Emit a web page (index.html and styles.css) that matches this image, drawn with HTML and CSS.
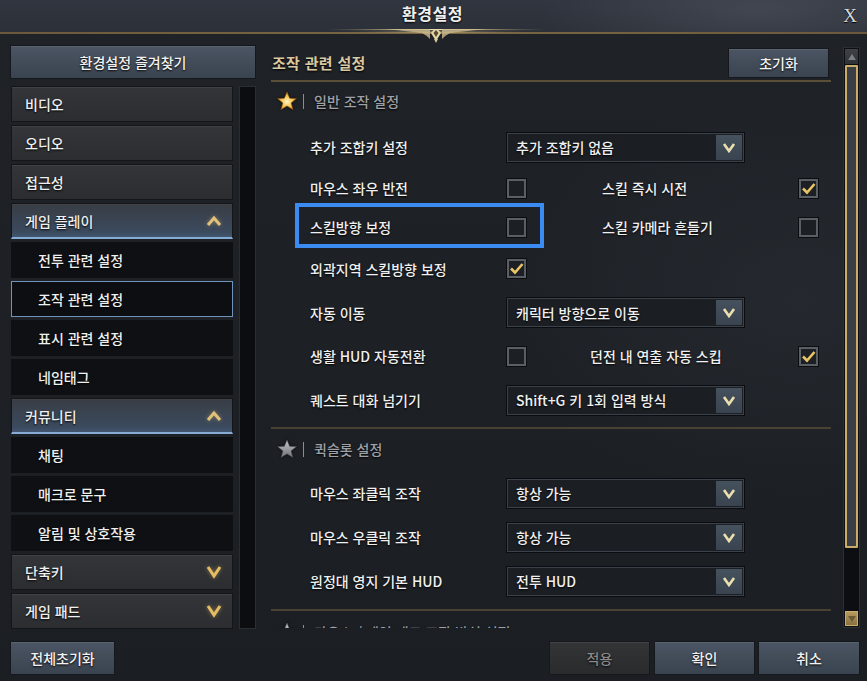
FILE: index.html
```html
<!DOCTYPE html>
<html lang="ko">
<head>
<meta charset="utf-8">
<title>환경설정</title>
<link rel="stylesheet" href="styles.css">
</head>
<body>
<div class="window">
  <header class="titlebar">
    <div class="title">환경설정</div>
    <div class="close">X</div>
  </header>
  <div class="title-line">
    <svg class="ornament" width="220" height="14" viewBox="0 0 220 14">
      <defs>
        <linearGradient id="og" x1="0" x2="1" y1="0" y2="0">
          <stop offset="0" stop-color="#8a7a55" stop-opacity="0"/>
          <stop offset="0.35" stop-color="#cbb98a"/>
          <stop offset="0.5" stop-color="#efe2b8"/>
          <stop offset="0.65" stop-color="#cbb98a"/>
          <stop offset="1" stop-color="#8a7a55" stop-opacity="0"/>
        </linearGradient>
      </defs>
      <rect x="0" y="0" width="220" height="1.2" fill="url(#og)"/>
      <rect x="20" y="2.5" width="180" height="1" fill="url(#og)" opacity="0.7"/>
      <path d="M104 0 L60 0 Q80 2 96 4 Q100 6 104 10 Z" fill="#cdbb8c" opacity="0.8"/>
      <path d="M116 0 L160 0 Q140 2 124 4 Q120 6 116 10 Z" fill="#cdbb8c" opacity="0.8"/>
      <path d="M110 -2 L115 4 L110 12 L105 4 Z" fill="#e6d6a6"/>
      <path d="M110 1 L112.5 4 L110 8 L107.5 4 Z" fill="#5a4c30"/>
      <path d="M108 10 L110 14 L112 10 Z" fill="#d8c89a"/>
    </svg>
  </div>

  <div class="main">
    <aside class="side">
      <button class="btn fav">환경설정 즐겨찾기</button>
      <div class="side-body">
        <ul class="menu">
          <li class="cat">비디오</li>
          <li class="cat">오디오</li>
          <li class="cat">접근성</li>
          <li class="cat open">게임 플레이
            <svg class="chev" width="16" height="12" viewBox="0 0 16 12"><path d="M2 10 L8 3 L14 10" fill="none" stroke="#e2c27a" stroke-width="3" stroke-linejoin="miter"/></svg>
          </li>
          <li class="sub">전투 관련 설정</li>
          <li class="sub active">조작 관련 설정</li>
          <li class="sub">표시 관련 설정</li>
          <li class="sub">네임태그</li>
          <li class="cat open">커뮤니티
            <svg class="chev" width="16" height="12" viewBox="0 0 16 12"><path d="M2 10 L8 3 L14 10" fill="none" stroke="#e2c27a" stroke-width="3"/></svg>
          </li>
          <li class="sub">채팅</li>
          <li class="sub">매크로 문구</li>
          <li class="sub">알림 및 상호작용</li>
          <li class="cat">단축키
            <svg class="chev" width="16" height="14" viewBox="0 0 16 14"><path d="M2 2 L8 11 L14 2" fill="none" stroke="#e6bd62" stroke-width="3"/></svg>
          </li>
          <li class="cat">게임 패드
            <svg class="chev" width="16" height="14" viewBox="0 0 16 14"><path d="M2 2 L8 11 L14 2" fill="none" stroke="#e6bd62" stroke-width="3"/></svg>
          </li>
        </ul>
        <div class="side-scroll"></div>
      </div>
    </aside>

    <section class="panel">
      <div class="panel-main">
        <div class="panel-head">
          <h2 class="panel-title">조작 관련 설정</h2>
          <button class="btn reset">초기화</button>
        </div>
        <div class="head-line"></div>
        <div class="scroll-area">
          <div class="group">
            <div class="group-title">
              <svg class="star" width="20" height="20" viewBox="0 0 20 20">
                <defs>
                  <radialGradient id="sg" cx="0.5" cy="0.55" r="0.6">
                    <stop offset="0" stop-color="#fff6c8"/>
                    <stop offset="0.5" stop-color="#f5c24e"/>
                    <stop offset="1" stop-color="#c9791c"/>
                  </radialGradient>
                </defs>
                <polygon points="10,0.8 12.7,7.2 19.6,7.5 14.2,11.9 16.1,18.8 10,14.9 3.9,18.8 5.8,11.9 0.4,7.5 7.3,7.2" fill="url(#sg)" stroke="#7a4a10" stroke-width="0.6"/>
              </svg>
              <span class="vbar"></span>
              <span>일반 조작 설정</span>
            </div>
            <div class="rows">
              <div class="row dd r46">
                <span class="label">추가 조합키 설정</span>
                <div class="select"><span>추가 조합키 없음</span><span class="arrow"><svg width="14" height="11" viewBox="0 0 14 11"><path d="M2 2 L7 9 L12 2" fill="none" stroke="#ecdfae" stroke-width="2.6"/></svg></span></div>
              </div>
              <div class="row r36">
                <span class="label">마우스 좌우 반전</span>
                <span class="check"></span>
                <span class="label">스킬 즉시 시전</span>
                <span class="check on"><svg width="15" height="15" viewBox="0 0 15 15"><path d="M2 7.5 L6 11.5 L13.5 3" fill="none" stroke="#e8c466" stroke-width="2.6"/></svg></span>
              </div>
              <div class="row r42 hl-row">
                <span class="label">스킬방향 보정</span>
                <span class="check"></span>
                <span class="label">스킬 카메라 흔들기</span>
                <span class="check"></span>
                <span class="highlight"></span>
              </div>
              <div class="row r41">
                <span class="label">외곽지역 스킬방향 보정</span>
                <span class="check on"><svg width="15" height="15" viewBox="0 0 15 15"><path d="M2 7.5 L6 11.5 L13.5 3" fill="none" stroke="#e8c466" stroke-width="2.6"/></svg></span>
              </div>
              <div class="row dd r47">
                <span class="label">자동 이동</span>
                <div class="select"><span>캐릭터 방향으로 이동</span><span class="arrow"><svg width="14" height="11" viewBox="0 0 14 11"><path d="M2 2 L7 9 L12 2" fill="none" stroke="#ecdfae" stroke-width="2.6"/></svg></span></div>
              </div>
              <div class="row r40">
                <span class="label">생활 HUD 자동전환</span>
                <span class="check"></span>
                <span class="label shift">던전 내 연출 자동 스킵</span>
                <span class="check on"><svg width="15" height="15" viewBox="0 0 15 15"><path d="M2 7.5 L6 11.5 L13.5 3" fill="none" stroke="#e8c466" stroke-width="2.6"/></svg></span>
              </div>
              <div class="row dd r48">
                <span class="label">퀘스트 대화 넘기기</span>
                <div class="select"><span>Shift+G 키 1회 입력 방식</span><span class="arrow"><svg width="14" height="11" viewBox="0 0 14 11"><path d="M2 2 L7 9 L12 2" fill="none" stroke="#ecdfae" stroke-width="2.6"/></svg></span></div>
              </div>
            </div>
          </div>
          <div class="sep"></div>

          <div class="group g2">
            <div class="group-title">
              <svg class="star" width="20" height="20" viewBox="0 0 20 20">
                <defs>
                  <linearGradient id="gg" x1="0" x2="0" y1="0" y2="1">
                    <stop offset="0" stop-color="#c4c8cc"/>
                    <stop offset="1" stop-color="#6c7076"/>
                  </linearGradient>
                </defs>
                <polygon points="10,0.8 12.7,7.2 19.6,7.5 14.2,11.9 16.1,18.8 10,14.9 3.9,18.8 5.8,11.9 0.4,7.5 7.3,7.2" fill="url(#gg)" stroke="#3a3d42" stroke-width="0.6"/>
              </svg>
              <span class="vbar"></span>
              <span>퀵슬롯 설정</span>
            </div>
            <div class="rows">
              <div class="row dd r44">
                <span class="label">마우스 좌클릭 조작</span>
                <div class="select"><span>항상 가능</span><span class="arrow"><svg width="14" height="11" viewBox="0 0 14 11"><path d="M2 2 L7 9 L12 2" fill="none" stroke="#ecdfae" stroke-width="2.6"/></svg></span></div>
              </div>
              <div class="row dd r44">
                <span class="label">마우스 우클릭 조작</span>
                <div class="select"><span>항상 가능</span><span class="arrow"><svg width="14" height="11" viewBox="0 0 14 11"><path d="M2 2 L7 9 L12 2" fill="none" stroke="#ecdfae" stroke-width="2.6"/></svg></span></div>
              </div>
              <div class="row dd r44">
                <span class="label">원정대 영지 기본 HUD</span>
                <div class="select"><span>전투 HUD</span><span class="arrow"><svg width="14" height="11" viewBox="0 0 14 11"><path d="M2 2 L7 9 L12 2" fill="none" stroke="#ecdfae" stroke-width="2.6"/></svg></span></div>
              </div>
            </div>
          </div>
          <div class="sep"></div>

          <div class="group g3">
            <div class="group-title">
              <svg class="star" width="20" height="20" viewBox="0 0 20 20">
                <polygon points="10,0.8 12.7,7.2 19.6,7.5 14.2,11.9 16.1,18.8 10,14.9 3.9,18.8 5.8,11.9 0.4,7.5 7.3,7.2" fill="url(#gg)" stroke="#3a3d42" stroke-width="0.6"/>
              </svg>
              <span class="vbar"></span>
              <span>마우스 / 게임 패드 조작 방식 설정</span>
            </div>
          </div>
        </div>
      </div>
      <div class="vscroll">
        <div class="vs-btn up"><svg width="10" height="8" viewBox="0 0 10 8"><path d="M1 7 L5 1 L9 7 Z" fill="#7c7f84"/></svg></div>
        <div class="vs-thumb"></div>
        <div class="vs-track"></div>
        <div class="vs-btn down"><svg width="10" height="8" viewBox="0 0 10 8"><path d="M1 1 L5 7 L9 1 Z" fill="#6b5a38"/></svg></div>
      </div>
    </section>
  </div>

  <footer class="footer">
    <button class="btn footbtn wide">전체초기화</button>
    <div class="foot-right">
      <button class="btn footbtn disabled">적용</button>
      <button class="btn footbtn">확인</button>
      <button class="btn footbtn last">취소</button>
    </div>
  </footer>
</div>
</body>
</html>
```

FILE: styles.css
```css
* { box-sizing: border-box; }

html, body {
  margin: 0;
  padding: 0;
  width: 867px;
  height: 681px;
  overflow: hidden;
  background: #1c1f24;
}

body {
  font-family: "Noto Sans CJK KR", "Noto Sans", sans-serif;
  font-size: 14px;
  font-weight: 500;
  color: #ececec;
}

.window {
  width: 867px;
  height: 681px;
  display: flex;
  flex-direction: column;
  background:
    radial-gradient(ellipse 300px 200px at 800px 300px, rgba(60,66,76,0.25), transparent),
    linear-gradient(#1f2227, #1b1e22);
}

/* title */
.titlebar {
  height: 32px;
  position: relative;
  display: flex;
  align-items: center;
  justify-content: center;
  background:
    radial-gradient(ellipse 220px 60px at 760px 10px, rgba(120,126,138,0.25), transparent),
    linear-gradient(#30353f, #2b3039);
}

.title {
  font-size: 16px;
  font-weight: 700;
  color: #f0f0f0;
  letter-spacing: 0.5px;
  text-shadow: 0 1px 2px #000;
  margin-left: -2px;
  margin-top: -6px;
}

.close {
  position: absolute;
  right: 10px;
  top: 5px;
  font-family: "Liberation Serif", serif;
  font-size: 19px;
  color: #d8d8d8;
  text-shadow: 0 1px 1px #000;
}

.title-line {
  height: 2px;
  background: linear-gradient(90deg, #6b5a3a, #7a6744 50%, #6b5a3a);
  position: relative;
}

.ornament {
  position: absolute;
  left: 326px;
  top: -3px;
}

/* main */
.main {
  display: grid;
  grid-template-columns: 246px 589px;
  column-gap: 15px;
  padding: 11px 7px 0 10px;
  height: 595px;
}

.btn {
  font-family: inherit;
  font-size: 14px;
  font-weight: 500;
  color: #f2f2f2;
  text-shadow: 0 1px 2px #000;
  border: 1px solid #15181c;
  background: linear-gradient(#4b5563, #3a4450);
  box-shadow: inset 0 1px 0 rgba(255,255,255,0.08);
  padding: 0;
  cursor: default;
}

.fav {
  width: 246px;
  height: 34px;
  display: block;
}

.side-body {
  display: flex;
  margin-top: 7px;
  gap: 6px;
  padding-left: 1px;
}

.menu {
  list-style: none;
  margin: 0;
  padding: 0;
  width: 223px;
  display: flex;
  flex-direction: column;
  gap: 3px;
}

.menu li {
  height: 36px;
  display: flex;
  align-items: center;
  justify-content: space-between;
  text-shadow: 0 1px 2px #000;
  color: #f0f0f0;
}

.cat {
  padding: 0 10px 0 13px;
  background: linear-gradient(#333539, #2b2d30);
  border: 1px solid #141518;
  box-shadow: inset 0 1px 0 #3f4145;
}

.cat.open {
  background: linear-gradient(#393d44, #3b4a5e 85%, #41566f);
  border-bottom: 2px solid #86acd6;
}

.sub {
  padding-left: 26px;
  background: #0e1013;
  border: 1px solid #0e1013;
}

.sub.active {
  border: 1px solid #6f93bb;
  background: #0c0e11;
}

.chev {
  display: block;
  filter: drop-shadow(0 0 2px rgba(240,200,110,0.45));
}

.side-scroll {
  width: 17px;
  height: 543px;
  background: #0c0d10;
  border: 1px solid #2a2d32;
}

/* panel */
.panel {
  display: flex;
  gap: 12px;
}

.panel-main {
  width: 560px;
  display: flex;
  flex-direction: column;
}

.panel-head {
  height: 34px;
  display: flex;
  align-items: center;
  justify-content: space-between;
  padding: 0 2px 0 1px;
}

.panel-title {
  margin: 0;
  font-size: 15px;
  font-weight: 700;
  color: #d9c9a0;
  text-shadow: 0 1px 2px #000;
  letter-spacing: 0.3px;
}

.reset {
  width: 101px;
  height: 30px;
  margin-top: 2px;
}

.head-line {
  height: 2px;
  margin-top: 1px;
  background: #5a5038;
}

.scroll-area {
  height: 546px;
  overflow: hidden;
}

.group-title {
  height: 30px;
  display: flex;
  align-items: center;
  padding-left: 6px;
  color: #9ea2a8;
  text-shadow: 0 1px 2px #000;
  margin-top: 4px;
}

.star {
  display: block;
  filter: drop-shadow(0 0 1px rgba(0,0,0,0.8));
}

.vbar {
  width: 1px;
  height: 15px;
  background: #8a8e94;
  margin: 0 10px 0 6px;
}

.rows {
  margin-top: 8px;
  padding-left: 39px;
}

.row {
  display: grid;
  grid-template-columns: 196px 96px 196px 1fr;
  align-items: center;
  position: relative;
}

.r36 { height: 36px; }
.r40 { height: 40px; }
.r41 { height: 41px; }
.r42 { height: 42px; }
.r44 { height: 44px; }
.r46 { height: 46px; }
.r47 { height: 47px; }
.r48 { height: 48px; }

.label {
  color: #f0f0f0;
  text-shadow: 0 1px 2px #000;
  white-space: nowrap;
}

.label.shift { margin-left: -12px; }

.check {
  width: 19px;
  height: 19px;
  margin-left: 1px;
  border: 2px solid #5a5e65;
  background: #1c1f24;
  box-shadow: 0 0 0 1px #0c0d10;
  display: flex;
  align-items: center;
  justify-content: center;
}

.check svg { display: block; }

.select {
  grid-column: 2 / span 2;
  width: 239px;
  height: 31px;
  border: 1px solid #0b0c0f;
  box-shadow: inset 0 0 0 1px #3a414b;
  background: #1b1e23;
  display: flex;
  align-items: center;
  justify-content: space-between;
  padding: 0 2px 0 9px;
  color: #f0f0f0;
  text-shadow: 0 1px 2px #000;
}

.arrow {
  width: 26px;
  height: 25px;
  background: linear-gradient(#46515e, #3a4451);
  display: flex;
  align-items: center;
  justify-content: center;
}

.arrow svg { display: block; }

.highlight {
  position: absolute;
  left: -15px;
  top: -3px;
  width: 249px;
  height: 45px;
  border: 4px solid #3b8cf2;
  pointer-events: none;
}

.sep {
  height: 2px;
  margin-top: 3px;
  background: #4a4231;
}

.g2 .group-title { margin-top: 5px; }
.g2 .rows { margin-top: 7px; }
.g3 .group-title { margin-top: 6px; }
.g2 + .sep { margin-top: 6px; }

/* vertical scroll */
.vscroll {
  width: 17px;
  height: 581px;
  margin-top: 2px;
  background: #0d0e11;
  border: 1px solid #2b2e33;
  display: flex;
  flex-direction: column;
  padding: 1px;
}

.vs-btn {
  height: 15px;
  background: linear-gradient(#3e4248, #2f3236);
  display: flex;
  align-items: center;
  justify-content: center;
}

.vs-btn.down {
  background: linear-gradient(#b89a5c, #8a7040);
  border: 1px solid #c9ad6c;
}

.vs-thumb {
  height: 483px;
  margin-top: 1px;
  background: #3a3f46;
  border: 2px solid #c9ac6a;
  border-radius: 1px;
}

.vs-track { flex: 1; }

/* footer */
.footer {
  display: flex;
  justify-content: space-between;
  padding: 0 7px 0 10px;
  margin-top: 12px;
}

.footbtn {
  width: 101px;
  height: 34px;
}

.footbtn.wide { width: 105px; }
.footbtn.last { width: 102px; }

.foot-right {
  display: flex;
  gap: 3px;
}

.footbtn.disabled {
  background: linear-gradient(#333436, #2a2b2d);
  color: #8a8a8a;
  margin-right: 1px;
}
```
